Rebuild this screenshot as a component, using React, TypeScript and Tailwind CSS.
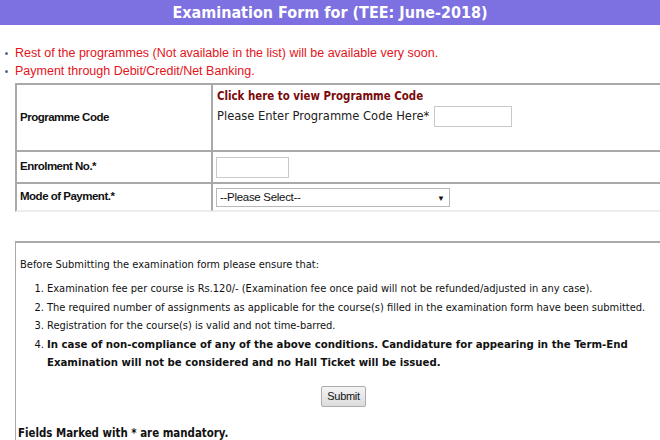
import React from "react";

export default function App() {
  return (
    <div className="w-[660px] h-[440px] overflow-hidden bg-white relative">
      {/* Title bar */}
      <div className="h-[25px] bg-[#7d70e0] text-white font-bold text-[16px] leading-[25px] text-center font-['DejaVu_Sans_Condensed','DejaVu_Sans',sans-serif]">
        Examination Form for (TEE: June-2018)
      </div>

      {/* Notices */}
      <ul className="mt-[19px] text-[12.5px] leading-[18px] text-[#e3131b] font-['Liberation_Sans',Arial,sans-serif]">
        <li className="flex items-center whitespace-nowrap">
          <span className="ml-[5px] mr-[7px] w-[3px] h-[3px] rounded-full bg-[#5b6b8c]" />
          Rest of the programmes (Not available in the list) will be available very soon.
        </li>
        <li className="flex items-center whitespace-nowrap">
          <span className="ml-[5px] mr-[7px] w-[3px] h-[3px] rounded-full bg-[#5b6b8c]" />
          Payment through Debit/Credit/Net Banking.
        </li>
      </ul>

      {/* Form table */}
      <table className="mt-[3px] ml-[15px] w-[657px] table-fixed border-separate border-spacing-0 border border-[#a9a9a9] border-b-[#ededed]">
        <colgroup>
          <col className="w-[196px]" />
          <col />
        </colgroup>
        <tbody>
          <tr>
            <td className="p-0 border border-[#a9a9a9] align-middle">
              <div className="h-[65px] flex items-center pl-[3px] text-[11.5px] tracking-[-0.5px] font-bold text-[#111] font-['Liberation_Sans',Arial,sans-serif]">
                Programme Code
              </div>
            </td>
            <td className="p-0 border border-[#a9a9a9] align-top">
              <div className="h-[65px] pt-[4px] pl-[4px]">
                <div className="text-[11.4px] leading-[15px] font-bold text-[#7a0a0a] font-['DejaVu_Sans_Condensed','DejaVu_Sans',sans-serif] cursor-pointer">
                  Click here to view Programme Code
                </div>
                <div className="flex items-center h-[22px] mt-[1px]">
                  <span className="text-[12.8px] text-[#222] font-['DejaVu_Sans_Condensed','DejaVu_Sans',sans-serif] whitespace-nowrap">
                    Please Enter Programme Code Here*
                  </span>
                  <input
                    type="text"
                    className="block ml-[5px] w-[78px] h-[21px] border border-[#c9c9c9] bg-white outline-none"
                  />
                </div>
              </div>
            </td>
          </tr>
          <tr>
            <td className="p-0 border border-[#a9a9a9]">
              <div className="h-[30px] flex items-center pl-[3px] text-[11.5px] tracking-[-0.5px] font-bold text-[#111] font-['Liberation_Sans',Arial,sans-serif]">
                Enrolment No.*
              </div>
            </td>
            <td className="p-0 border border-[#a9a9a9]">
              <div className="h-[30px] flex items-center pl-[3px]">
                <input
                  type="text"
                  className="block w-[73px] h-[21px] border border-[#c9c9c9] bg-white outline-none"
                />
              </div>
            </td>
          </tr>
          <tr>
            <td className="p-0 border border-[#a9a9a9] border-b-[#ededed]">
              <div className="h-[26px] flex items-center pl-[3px] text-[11.5px] tracking-[-0.5px] font-bold text-[#111] font-['Liberation_Sans',Arial,sans-serif]">
                Mode of Payment.*
              </div>
            </td>
            <td className="p-0 border border-[#a9a9a9] border-b-[#ededed]">
              <div className="h-[26px] flex items-center pl-[3px]">
                <div className="relative w-[234px] h-[19px]">
                  <select className="block appearance-none w-full h-[19px] border border-[#b9b9b9] bg-white pl-[3px] py-0 text-[11.5px] leading-[17px] tracking-[-0.3px] text-[#111] font-['Liberation_Sans',Arial,sans-serif] outline-none">
                    <option>--Please Select--</option>
                  </select>
                  <span className="pointer-events-none absolute right-[5px] top-[5px] text-[8px] leading-[9px] text-[#111]">
                    ▼
                  </span>
                </div>
              </div>
            </td>
          </tr>
        </tbody>
      </table>

      {/* Instructions box */}
      <div className="mt-[29px] ml-[15px] w-[657px] h-[210px] border-l border-r border-t-2 border-[#a9a9a9] text-[#111] font-['DejaVu_Sans_Condensed','DejaVu_Sans',sans-serif]">
        <p className="pt-[14px] pl-[4px] text-[11px] leading-[16px] whitespace-nowrap">
          Before Submitting the examination form please ensure that:
        </p>
        <ol className="mt-[7px] pl-[31px] list-decimal text-[11px] leading-[18.6px] whitespace-nowrap">
          <li>
            Examination fee per course is Rs.120/- (Examination fee once paid will not be refunded/adjusted in any case).
          </li>
          <li>
            The required number of assignments as applicable for the course(s) filled in the examination form have been submitted.
          </li>
          <li>Registration for the course(s) is valid and not time-barred.</li>
          <li>
            <span className="font-bold text-[11.3px] text-[#111]">
              In case of non-compliance of any of the above conditions. Candidature for appearing in the Term-End
              <br />
              Examination will not be considered and no Hall Ticket will be issued.
            </span>
          </li>
        </ol>
        <div className="mt-[13px] flex justify-center">
          <button
            type="button"
            className="w-[45px] h-[21px] border border-[#acacac] rounded-[2px] bg-gradient-to-b from-[#f4f4f4] to-[#dcdcdc] text-[11px] tracking-[-0.3px] text-[#111] font-['Liberation_Sans',Arial,sans-serif]"
          >
            Submit
          </button>
        </div>
        <p className="mt-[18px] pl-[2px] text-[11.4px] leading-[16px] font-bold text-[#111] whitespace-nowrap">
          Fields Marked with * are mandatory.
        </p>
      </div>
    </div>
  );
}
